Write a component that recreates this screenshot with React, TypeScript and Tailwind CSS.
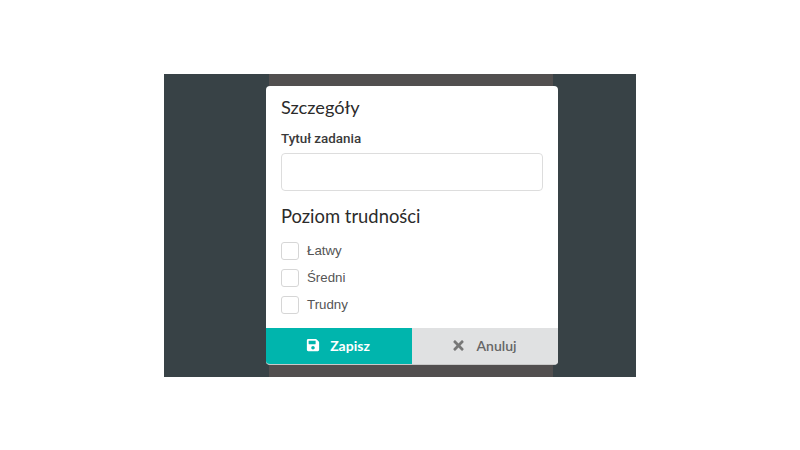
import { FaSave, FaTimes } from "react-icons/fa";

const levels = ["Łatwy", "Średni", "Trudny"];

export default function App() {
  return (
    <div className="h-[450px] w-[800px] bg-white pt-[74px]">
      <div className="relative ml-[164px] flex h-[303px] w-[472px] bg-[#384246]">
        {/* Page behind the modal */}
        <div className="w-[105px]" />
        <div className="w-[284px] bg-[#524f4f]" />

        {/* Modal */}
        <div className="absolute left-[102px] top-[12px] flex h-[279px] w-[292px] flex-col overflow-hidden rounded-[4px] border-b border-[#c9c9c9] bg-white font-['Lato',sans-serif]">
          <div className="flex flex-1 flex-col px-[15px]">
            <h2 className="mt-[9px] text-[18.2px] leading-[24px] font-normal text-[#2b2b2b]">Szczegóły</h2>
            <label className="mt-[11px] font-['Roboto',sans-serif] text-[13.4px] leading-[18px] font-medium text-[#3a3a3a]">
              Tytuł zadania
            </label>
            <input
              type="text"
              className="mt-[5px] h-[38px] w-[262px] rounded-[4px] border border-[#dddddd] bg-white outline-none"
            />
            <h2 className="mt-[13px] text-[18.4px] leading-[24px] font-normal text-[#2b2b2b]">Poziom trudności</h2>
            <div className="mt-[14px] flex flex-col gap-[9px]">
              {levels.map((level) => (
                <label key={level} className="flex h-[18px] items-center gap-[8px]">
                  <span className="h-[18px] w-[18px] rounded-[3px] border border-[#d6d6d6] bg-white" />
                  <span className="font-['Liberation_Sans',sans-serif] text-[13.3px] text-[#555555]">{level}</span>
                </label>
              ))}
            </div>
          </div>

          {/* Actions */}
          <div className="flex h-[36px]">
            <button
              type="button"
              className="flex w-[146px] items-center justify-center gap-[10px] bg-[#00b5ad] pr-[2px] pb-[2px] text-[14px] font-bold text-white"
            >
              <FaSave className="h-[14px] w-[14px]" />
              Zapisz
            </button>
            <button
              type="button"
              className="flex w-[146px] items-center justify-center gap-[10px] bg-[#e0e1e2] pr-[2px] pb-[2px] text-[14px] font-semibold text-[#666666]"
            >
              <FaTimes className="h-[15px] w-[15px] text-[#777777]" />
              Anuluj
            </button>
          </div>
        </div>
      </div>
    </div>
  );
}
